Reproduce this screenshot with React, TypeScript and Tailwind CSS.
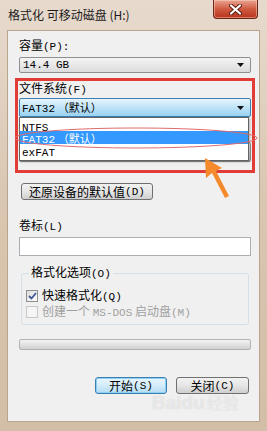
import React from "react";

const CJK = "font-['Noto_Sans_CJK_SC',sans-serif]";

function M({ children }: { children: React.ReactNode }) {
  return <span className="font-['Liberation_Mono','Noto_Sans_CJK_SC',monospace] text-[11px]">{children}</span>;
}

function Arrow() {
  return (
    <svg width="7" height="4" viewBox="0 0 7 4" className="shrink-0">
      <path d="M0 0 H7 L3.5 4 Z" fill="#111" />
    </svg>
  );
}

export default function App() {
  return (
    <div className={`relative w-[267px] h-[431px] overflow-hidden bg-gradient-to-b from-[#e7dacd] via-[#d9c5b0] to-[#d3bea7] text-[12px] leading-[14px] text-black ${CJK}`}>
      {/* title bar */}
      <div className="flex h-[30px] items-start justify-between pl-[8px] pr-[9px]">
        <div className="pt-[8px] text-[12px] leading-[14px] text-[#1b1b1b]">格式化 可移动磁盘 (H:)</div>
        <div className="flex h-[19px] w-[45px] items-center justify-center rounded-b-[4px] border border-t-0 border-[#6e2418] bg-gradient-to-b from-[#e9a493] via-[#cf5a41] to-[#b8321c] shadow-[inset_0_0_0_1px_rgba(255,220,200,0.45)]">
          <svg width="13" height="11" viewBox="0 0 13 11">
            <path d="M2 1.5 L11 9.5 M11 1.5 L2 9.5" stroke="#5a1a10" strokeWidth="4" strokeLinecap="round" />
            <path d="M2 1.5 L11 9.5 M11 1.5 L2 9.5" stroke="#ffffff" strokeWidth="2.2" strokeLinecap="round" />
          </svg>
        </div>
      </div>

      {/* client area */}
      <div className="mx-[7px] h-[392px] border border-[#b9a48e] bg-[#f0f0f0] pl-[11px] pr-[8px] pt-[7px]">
        <div className="h-[14px]">容量<M>(P):</M></div>
        <div className="mt-[5px] flex h-[16px] items-center justify-between rounded-[2px] border border-[#8e8f8f] bg-gradient-to-b from-[#f4f4f4] to-[#dcdcdc] pl-[3px] pr-[6px]">
          <M>14.4 GB</M>
          <Arrow />
        </div>

        <div className="mt-[8px] h-[14px]">文件系统<M>(F)</M></div>
        <div className="relative mt-[3px]">
          <div className="flex h-[19px] items-center justify-between rounded-[2px] border border-[#3c7fb1] bg-gradient-to-b from-[#e6f4fc] via-[#bfe3f7] to-[#9ad2f1] pl-[2px] pr-[6px]">
            <span><M>FAT32</M> <span className="text-[11px]">（默认）</span></span>
            <Arrow />
          </div>
          <div className="relative mt-[25px] h-[20px] rounded-[2px] border border-[#8e8f8f] bg-gradient-to-b from-[#f4f4f4] to-[#c8c8c8]" />
          {/* open dropdown list */}
          <div className="absolute left-0 right-[2px] top-[19px] z-10 flex flex-col border border-[#646464] bg-white pb-[3px] shadow-[1px_1px_2px_rgba(0,0,0,0.25)]">
            <div className="h-[13px] pl-[2px] pt-[1px]"><M>NTFS</M></div>
            <div className="h-[13px] bg-[#3399ff] pl-[2px] text-white"><M>FAT32</M> <span className="text-[11px]">（默认）</span></div>
            <div className="h-[13px] pl-[2px]"><M>exFAT</M></div>
          </div>
        </div>

        <button className="ml-[2px] mt-[21px] flex h-[17px] w-[132px] items-center justify-center rounded-[3px] border border-[#707070] bg-gradient-to-b from-[#f2f2f2] via-[#e6e6e6] to-[#cfcfcf] text-[12px] leading-[14px]">
          还原设备的默认值<M>(D)</M>
        </button>

        <div className="mt-[18px] h-[14px]">卷标<M>(L)</M></div>
        <div className="mt-[5px] h-[19px] border border-[#abadb3] bg-white" />

        <fieldset className="mx-[2px] mt-[9px] rounded-[3px] border border-[#d5dfe5] px-[4px] pb-[5px] pt-[8px]">
          <legend className="ml-[3px] px-[2px] leading-[14px]">格式化选项<M>(O)</M></legend>
          <div className="flex h-[14px] items-center gap-[4px]">
            <div className="flex h-[12px] w-[12px] items-center justify-center border border-[#8e8f8f] bg-gradient-to-br from-[#dcdcdc] to-[#ffffff]">
              <svg width="9" height="8" viewBox="0 0 9 8">
                <path d="M1 4 L3.5 6.5 L8 1" stroke="#40569b" strokeWidth="1.8" fill="none" />
              </svg>
            </div>
            <span>快速格式化<M>(Q)</M></span>
          </div>
          <div className="mt-[2px] flex h-[14px] items-center gap-[4px] text-[#a0a0a0]">
            <div className="h-[12px] w-[12px] border border-[#c7c7c7] bg-[#f4f4f4]" />
            <span>创建一个 <M>MS-DOS</M> 启动盘<M>(M)</M></span>
          </div>
        </fieldset>

        <div className="mt-[14px] h-[11px] rounded-[2px] border border-[#b2b2b2] bg-gradient-to-b from-[#f3f3f3] via-[#e2e2e2] to-[#d0d0d0]" />

        <div className="mr-[2px] mt-[27px] flex justify-end gap-[9px]">
          <button className="flex h-[17px] w-[72px] items-center justify-center rounded-[3px] border border-[#3c7fb1] bg-gradient-to-b from-[#eaf6fd] via-[#d4ecfa] to-[#b3dcf4] text-[12px] leading-[14px] shadow-[inset_0_0_0_1px_#8ed0f5]">
            开始<M>(S)</M>
          </button>
          <button className="flex h-[17px] w-[73px] items-center justify-center rounded-[3px] border border-[#707070] bg-gradient-to-b from-[#f2f2f2] via-[#e6e6e6] to-[#cfcfcf] text-[12px] leading-[14px]">
            关闭<M>(C)</M>
          </button>
        </div>
      </div>

      {/* annotations */}
      <div className="pointer-events-none absolute left-[15px] top-[78px] h-[95px] w-[240px] border-[3px] border-[#e23c37]" />
      <svg className="pointer-events-none absolute left-0 top-0 z-20" width="267" height="431">
        <ellipse cx="136" cy="138" rx="121" ry="10" fill="none" stroke="#e06a6a" strokeWidth="1" />
        <path d="M205 158 L222 168 L216 171 L229 196 L225 198 L212 173 L206 178 Z" fill="#f58a2c" />
      </svg>
      <div className="pointer-events-none absolute left-[152px] top-[392px] z-20 flex items-baseline gap-[2px] font-['Liberation_Sans',sans-serif] text-[19px] font-bold leading-[20px] text-white/50 [text-shadow:0_0_1px_rgba(140,140,140,0.35)]">
        Baidu<span className={`text-[16px] font-normal ${CJK}`}>经验</span>
      </div>
    </div>
  );
}
